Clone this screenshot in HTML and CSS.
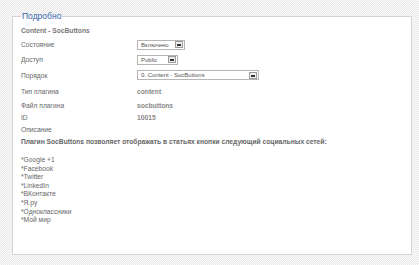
FILE: index.html
```html
<!DOCTYPE html>
<html lang="ru">
<head>
  <meta charset="UTF-8">
  <title>Подробно</title>
  <link rel="stylesheet" href="styles.css">
</head>
<body>

  <!-- Блок с деталями плагина -->
  <fieldset class="details">
    <legend>Подробно</legend>

    <div class="row row-head">
      <span class="title">Content - SocButtons</span>
    </div>

    <div class="row row-state">
      <span class="label">Состояние</span>
      <div class="select select-state"><span>Включено</span><i class="arrow"></i></div>
    </div>

    <div class="row row-access">
      <span class="label">Доступ</span>
      <div class="select select-access"><span>Public</span><i class="arrow"></i></div>
    </div>

    <div class="row row-order">
      <span class="label">Порядок</span>
      <div class="select select-order"><span>0. Content - SocButtons</span><i class="arrow"></i></div>
    </div>

    <div class="row row-type">
      <span class="label">Тип плагина</span>
      <span class="value">content</span>
    </div>

    <div class="row">
      <span class="label">Файл плагина</span>
      <span class="value">socbuttons</span>
    </div>

    <div class="row">
      <span class="label">ID</span>
      <span class="value">10015</span>
    </div>

    <div class="row">
      <span class="label">Описание</span>
    </div>

    <div class="row">
      <span class="desc">Плагин SocButtons позволяет отображать в статьях кнопки следующий социальных сетей:</span>
    </div>

    <ul class="networks">
      <li>*Google +1</li>
      <li>*Facebook</li>
      <li>*Twitter</li>
      <li>*LinkedIn</li>
      <li>*ВКонтакте</li>
      <li>*Я.ру</li>
      <li>*Одноклассники</li>
      <li>*Мой мир</li>
    </ul>
  </fieldset>

</body>
</html>
```

FILE: styles.css
```css
/* Общие стили */
body {
  margin: 0;
  padding: 11px 0 0 12px;
  font-family: 'Liberation Sans', Arial, sans-serif;
  font-size: 6.7px;
  color: #666;
  /* Фон в клеточку */
  background-color: #fafafa;
  background-image: repeating-conic-gradient(#e9e9e9 0 25%, #fbfbfb 0 50%);
  background-size: 2px 2px;
}

/* Рамка с легендой */
.details {
  box-sizing: border-box;
  width: 400px;
  height: 244px;
  margin: 0;
  padding: 3px 8px 0 8px;
  border: 1px solid #d4d4d4;
  background: #fff;
}

.details legend {
  padding: 0 1px;
  font-size: 8.5px;
  line-height: 10px;
  color: #3263a8;
}

/* Строки */
.row {
  display: flex;
  align-items: center;
  height: 12px;
}

.row-head { height: 13px; }
.row-state, .row-access { height: 15px; }
.row-order, .row-type { height: 16px; }

.label {
  width: 116px;
  flex: none;
}

.title {
  font-weight: bold;
  color: #7a7a7a;
}

.value {
  font-weight: bold;
  color: #888;
}

.desc {
  font-weight: bold;
  color: #666;
}

/* Выпадающие списки */
.select {
  box-sizing: border-box;
  display: flex;
  align-items: center;
  justify-content: space-between;
  height: 10px;
  padding: 0 1px 0 3px;
  border: 1px solid #b5b5b5;
  background: #fff;
  font-size: 6px;
  color: #555;
}

.select-state { width: 48px; }
.select-access { width: 41px; }
.select-order { width: 122px; }

.arrow {
  box-sizing: border-box;
  width: 8px;
  height: 7px;
  border: 1px solid #999;
  background: #eee;
  position: relative;
}

.arrow::after {
  content: '';
  position: absolute;
  left: 1px;
  top: 2px;
  width: 4px;
  height: 2px;
  background: #333;
}

/* Список соцсетей */
.networks {
  list-style: none;
  margin: 9px 0 0 0;
  padding: 0;
  line-height: 8.6px;
}
```
